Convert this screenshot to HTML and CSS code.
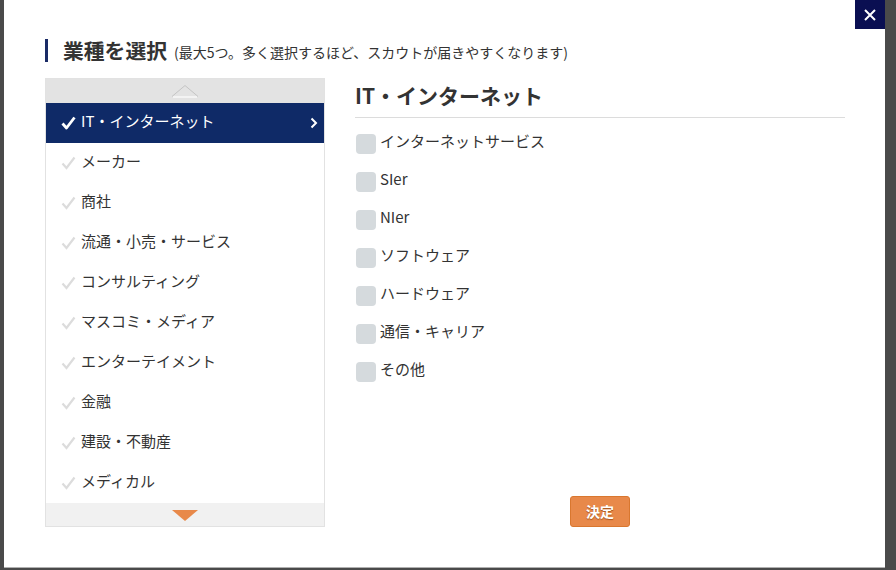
FILE: index.html
```html
<!DOCTYPE html>
<html lang="ja">
<head>
<meta charset="utf-8">
<title>業種を選択</title>
<link rel="stylesheet" href="styles.css">
</head>
<body>
<div class="overlay">
  <div class="modal">
    <button class="close" aria-label="閉じる">
      <svg width="14" height="14" viewBox="0 0 14 14"><path d="M2 2 L12 12 M12 2 L2 12" stroke="#fff" stroke-width="2" fill="none"/></svg>
    </button>
    <h2 class="title"><span class="title-main">業種を選択</span><span class="title-note">(最大5つ。多く選択するほど、スカウトが届きやすくなります)</span></h2>
    <div class="content">
      <div class="cat-panel">
        <div class="scroll-up">
          <svg width="28" height="14" viewBox="0 0 28 14"><path d="M1 12.5 L14 1.5 L27 12.5" stroke="#c4c4c4" stroke-width="1" fill="none"/><path d="M2 13 L26 13" stroke="#fafafa" stroke-width="1.4"/></svg>
        </div>
        <ul class="cat-list">
          <li class="cat-item active"><svg class="check" width="15" height="14" viewBox="0 0 15 14"><path d="M1.5 7.5 L5.5 12 L13.5 1.5" stroke="#fff" stroke-width="2.8" fill="none" stroke-linejoin="round"/></svg><span class="cat-label">IT・インターネット</span><svg class="chev" width="8" height="12" viewBox="0 0 8 12"><path d="M1.5 1.5 L6 6 L1.5 10.5" stroke="#fff" stroke-width="2" fill="none"/></svg></li>
          <li class="cat-item"><svg class="check" width="15" height="14" viewBox="0 0 15 14"><path d="M1.5 7.5 L5.5 12 L13.5 1.5" stroke="#dcdcdc" stroke-width="2.2" fill="none"/></svg><span class="cat-label">メーカー</span></li>
          <li class="cat-item"><svg class="check" width="15" height="14" viewBox="0 0 15 14"><path d="M1.5 7.5 L5.5 12 L13.5 1.5" stroke="#dcdcdc" stroke-width="2.2" fill="none"/></svg><span class="cat-label">商社</span></li>
          <li class="cat-item"><svg class="check" width="15" height="14" viewBox="0 0 15 14"><path d="M1.5 7.5 L5.5 12 L13.5 1.5" stroke="#dcdcdc" stroke-width="2.2" fill="none"/></svg><span class="cat-label">流通・小売・サービス</span></li>
          <li class="cat-item"><svg class="check" width="15" height="14" viewBox="0 0 15 14"><path d="M1.5 7.5 L5.5 12 L13.5 1.5" stroke="#dcdcdc" stroke-width="2.2" fill="none"/></svg><span class="cat-label">コンサルティング</span></li>
          <li class="cat-item"><svg class="check" width="15" height="14" viewBox="0 0 15 14"><path d="M1.5 7.5 L5.5 12 L13.5 1.5" stroke="#dcdcdc" stroke-width="2.2" fill="none"/></svg><span class="cat-label">マスコミ・メディア</span></li>
          <li class="cat-item"><svg class="check" width="15" height="14" viewBox="0 0 15 14"><path d="M1.5 7.5 L5.5 12 L13.5 1.5" stroke="#dcdcdc" stroke-width="2.2" fill="none"/></svg><span class="cat-label">エンターテイメント</span></li>
          <li class="cat-item"><svg class="check" width="15" height="14" viewBox="0 0 15 14"><path d="M1.5 7.5 L5.5 12 L13.5 1.5" stroke="#dcdcdc" stroke-width="2.2" fill="none"/></svg><span class="cat-label">金融</span></li>
          <li class="cat-item"><svg class="check" width="15" height="14" viewBox="0 0 15 14"><path d="M1.5 7.5 L5.5 12 L13.5 1.5" stroke="#dcdcdc" stroke-width="2.2" fill="none"/></svg><span class="cat-label">建設・不動産</span></li>
          <li class="cat-item"><svg class="check" width="15" height="14" viewBox="0 0 15 14"><path d="M1.5 7.5 L5.5 12 L13.5 1.5" stroke="#dcdcdc" stroke-width="2.2" fill="none"/></svg><span class="cat-label">メディカル</span></li>
        </ul>
        <div class="scroll-down">
          <svg width="26" height="11" viewBox="0 0 26 11"><path d="M0 0 L26 0 L13 11 Z" fill="#e8894a"/></svg>
        </div>
      </div>
      <div class="sub-panel">
        <h3 class="sub-title">IT・インターネット</h3>
        <ul class="sub-list">
          <li class="sub-item"><span class="box"></span><span class="sub-label">インターネットサービス</span></li>
          <li class="sub-item"><span class="box"></span><span class="sub-label">SIer</span></li>
          <li class="sub-item"><span class="box"></span><span class="sub-label">NIer</span></li>
          <li class="sub-item"><span class="box"></span><span class="sub-label">ソフトウェア</span></li>
          <li class="sub-item"><span class="box"></span><span class="sub-label">ハードウェア</span></li>
          <li class="sub-item"><span class="box"></span><span class="sub-label">通信・キャリア</span></li>
          <li class="sub-item"><span class="box"></span><span class="sub-label">その他</span></li>
        </ul>
        <button class="submit">決定</button>
      </div>
    </div>
  </div>
</div>
</body>
</html>
```
FILE: styles.css
```css
* { box-sizing: border-box; }
html, body {
  margin: 0;
  padding: 0;
  width: 896px;
  height: 570px;
  overflow: hidden;
  background: #4a4a4a;
  font-family: "Noto Sans CJK JP", "Noto Sans", sans-serif;
  color: #333;
}
.overlay {
  padding-left: 4px;
}
.modal {
  position: relative;
  width: 881px;
  height: 568px;
  background: #fff;
  padding: 39px 40px 0 41px;
  border-bottom: 1px solid #b0b0b0;
}
.close {
  position: absolute;
  top: 0;
  right: 0;
  width: 30px;
  height: 29px;
  border: 0;
  padding: 0;
  background: #0a0f52;
  display: flex;
  align-items: center;
  justify-content: center;
}
.title {
  margin: 0 0 16px;
  height: 23px;
  border-left: 3px solid #1a2b66;
  padding-left: 15px;
  display: flex;
  align-items: center;
  white-space: nowrap;
}
.title-main {
  font-size: 20.8px;
  font-weight: bold;
  color: #333;
  line-height: 23px;
  margin-right: 7px;
}
.title-note {
  font-size: 14px;
  font-weight: normal;
  color: #333;
  line-height: 23px;
  padding-top: 4px;
}
.content {
  display: flex;
  gap: 30px;
}
.cat-panel {
  width: 280px;
  height: 449px;
  border: 1px solid #e2e2e2;
  display: flex;
  flex-direction: column;
}
.scroll-up {
  height: 24px;
  background: #e3e3e3;
  display: flex;
  justify-content: center;
  align-items: flex-end;
  padding-bottom: 5px;
}
.cat-list {
  list-style: none;
  margin: 0;
  padding: 0;
}
.cat-item {
  height: 40px;
  display: flex;
  align-items: center;
  padding-left: 15px;
  padding-right: 6px;
  font-size: 15px;
  color: #333;
}
.cat-item .check {
  margin-right: 5px;
  flex: none;
}
.cat-label {
  flex: 1;
  line-height: 20px;
  position: relative;
  top: -2px;
}
.cat-item.active {
  background: #0f2a67;
  color: #fff;
}
.chev { flex: none; }
.scroll-down {
  flex: 1;
  background: #f1f1f1;
  display: flex;
  justify-content: center;
  padding-top: 7px;
}
.sub-panel {
  width: 490px;
  height: 449px;
  display: flex;
  flex-direction: column;
  align-items: stretch;
}
.sub-title {
  margin: 0;
  height: 40px;
  border-bottom: 1px solid #dcdcdc;
  font-size: 21px;
  font-weight: bold;
  color: #333;
  line-height: 34px;
  white-space: nowrap;
}
.sub-list {
  list-style: none;
  margin: 16px 0 0;
  padding: 0 0 0 1px;
}
.sub-item {
  height: 20px;
  margin-bottom: 18px;
  display: flex;
  align-items: center;
  font-size: 15px;
  color: #333;
}
.box {
  width: 20px;
  height: 20px;
  border-radius: 4px;
  background: #d5dadd;
  margin-right: 4px;
  flex: none;
}
.sub-label {
  line-height: 20px;
  position: relative;
  top: -3px;
}
.submit {
  margin-top: auto;
  align-self: center;
  width: 60px;
  height: 31px;
  border: 1px solid #d9772f;
  border-radius: 3px;
  background: #e8894a;
  color: #fff;
  font-family: "Noto Sans CJK JP", sans-serif;
  font-size: 14px;
  font-weight: bold;
  text-shadow: 0 1px 1px rgba(120, 50, 0, 0.6);
  padding: 0;
  line-height: 29px;
}
```
